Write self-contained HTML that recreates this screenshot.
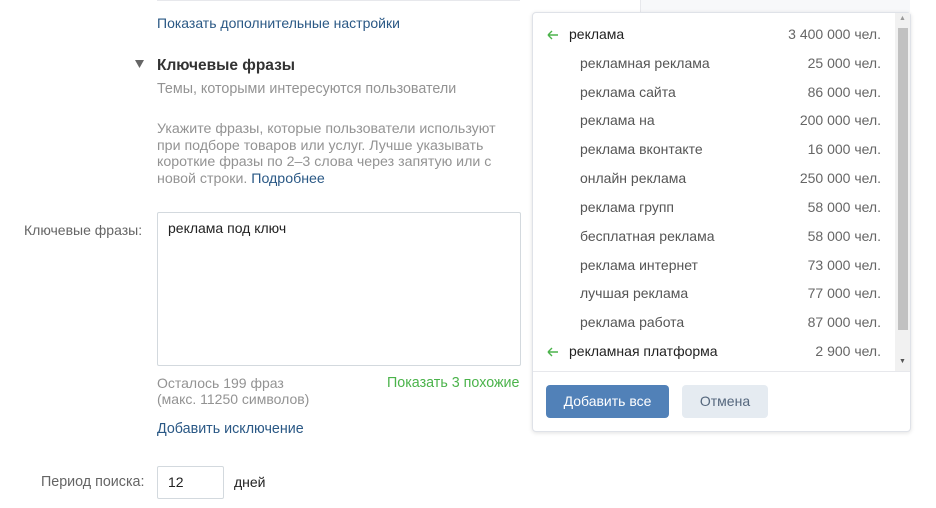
<!DOCTYPE html>
<html><head><meta charset="utf-8"><style>
*{box-sizing:border-box;margin:0;padding:0}
body{width:936px;height:508px;background:#fff;font-family:"Liberation Sans",Arial,sans-serif;font-size:13px;color:#222;position:relative;overflow:hidden}
.a{position:absolute;white-space:nowrap}
.link{color:#2a5885}
.grey{color:#939393}
.pop{position:absolute;left:532px;top:12px;width:379px;height:420px;background:#fff;border:1px solid #dfe2e8;border-radius:4px;box-shadow:0 1px 4px rgba(0,0,0,.12)}
.row{position:absolute;left:0;width:362px;height:29px;font-size:14px;line-height:29px}
.row .n{position:absolute;left:47px;color:#555}
.row .c{position:absolute;right:14px;color:#666}
.row.top .n{left:36px;color:#222}
.arr{position:absolute;left:14px;top:10px;width:12px;height:10px}
</style></head><body>
<div class="a" style="left:157px;top:0;width:363px;height:1px;background:#e7e8ec"></div>
<div class="a" style="left:640px;top:0;width:270px;height:12px;background:#f7f8fa;border-left:1px solid #e7e8ec"></div>
<div class="a link" style="left:157px;top:15px;font-size:14px">Показать дополнительные настройки</div>
<svg class="a" style="left:135px;top:60px" width="10" height="9"><path d="M0 0H9L4.5 8Z" fill="#666"/></svg>
<div class="a" style="left:157px;top:57px;font-size:15.5px;font-weight:bold;color:#333">Ключевые фразы</div>
<div class="a grey" style="left:157px;top:81px;font-size:14.3px">Темы, которыми интересуются пользователи</div>
<div class="a grey" style="left:157px;top:121px;font-size:14.2px;line-height:16.5px">Укажите фразы, которые пользователи используют<br>при подборе товаров или услуг. Лучше указывать<br>короткие фразы по 2–3 слова через запятую или с<br>новой строки. <span class="link">Подробнее</span></div>
<div class="a" style="left:24px;top:222px;font-size:14px;color:#656565">Ключевые фразы:</div>
<div class="a" style="left:157px;top:212px;width:364px;height:154px;border:1px solid #d3d9de;border-radius:2px"></div>
<div class="a" style="left:168px;top:220px;font-size:14px">реклама под ключ</div>
<div class="a grey" style="left:157px;top:375px;font-size:14px;line-height:16px">Осталось 199 фраз<br>(макс. 11250 символов)</div>
<div class="a" style="left:387px;top:375px;font-size:14.3px;color:#4bb34b">Показать 3 похожие</div>
<div class="a link" style="left:157px;top:421px;font-size:14.3px">Добавить исключение</div>
<div class="a" style="left:41px;top:474px;font-size:14.3px;color:#656565">Период поиска:</div>
<div class="a" style="left:157px;top:466px;width:67px;height:33px;border:1px solid #d3d9de;border-radius:2px"></div>
<div class="a" style="left:168px;top:474px;font-size:14px">12</div>
<div class="a" style="left:234px;top:474px;font-size:14px">дней</div>

<div class="pop">
<div class="a" style="left:362px;top:0;width:15px;height:358px;background:#f1f1f1"></div>
<div class="a" style="left:365px;top:15px;width:10px;height:302px;background:#c1c1c1"></div>
<div class="a" style="left:366px;top:2px;font-size:7px;color:#999">▲</div>
<div class="a" style="left:366px;top:345px;font-size:7px;color:#555">▼</div>
<div class="row top" style="top:7px"><svg class="arr"><path d="M1 5H11M1 5L5 1M1 5L5 9" stroke="#4bb34b" stroke-width="1.4" fill="none"/></svg><span class="n">реклама</span><span class="c">3 400 000 чел.</span></div>
<div class="row" style="top:36px"><span class="n">рекламная реклама</span><span class="c">25 000 чел.</span></div>
<div class="row" style="top:65px"><span class="n">реклама сайта</span><span class="c">86 000 чел.</span></div>
<div class="row" style="top:93px"><span class="n">реклама на</span><span class="c">200 000 чел.</span></div>
<div class="row" style="top:122px"><span class="n">реклама вконтакте</span><span class="c">16 000 чел.</span></div>
<div class="row" style="top:151px"><span class="n">онлайн реклама</span><span class="c">250 000 чел.</span></div>
<div class="row" style="top:180px"><span class="n">реклама групп</span><span class="c">58 000 чел.</span></div>
<div class="row" style="top:209px"><span class="n">бесплатная реклама</span><span class="c">58 000 чел.</span></div>
<div class="row" style="top:238px"><span class="n">реклама интернет</span><span class="c">73 000 чел.</span></div>
<div class="row" style="top:266px"><span class="n">лучшая реклама</span><span class="c">77 000 чел.</span></div>
<div class="row" style="top:295px"><span class="n">реклама работа</span><span class="c">87 000 чел.</span></div>
<div class="row top" style="top:324px"><svg class="arr"><path d="M1 5H11M1 5L5 1M1 5L5 9" stroke="#4bb34b" stroke-width="1.4" fill="none"/></svg><span class="n">рекламная платформа</span><span class="c">2 900 чел.</span></div>
<div class="a" style="left:0;top:358px;width:377px;height:1px;background:#e7e8ec"></div>
<div class="a" style="left:13px;top:372px;width:123px;height:33px;background:#5181b8;border-radius:4px;color:#fff;font-size:14px;text-align:center;line-height:33px">Добавить все</div>
<div class="a" style="left:149px;top:372px;width:86px;height:33px;background:#e5ebf1;border-radius:4px;color:#55677d;font-size:14px;text-align:center;line-height:33px">Отмена</div>
</div>
</body></html>
